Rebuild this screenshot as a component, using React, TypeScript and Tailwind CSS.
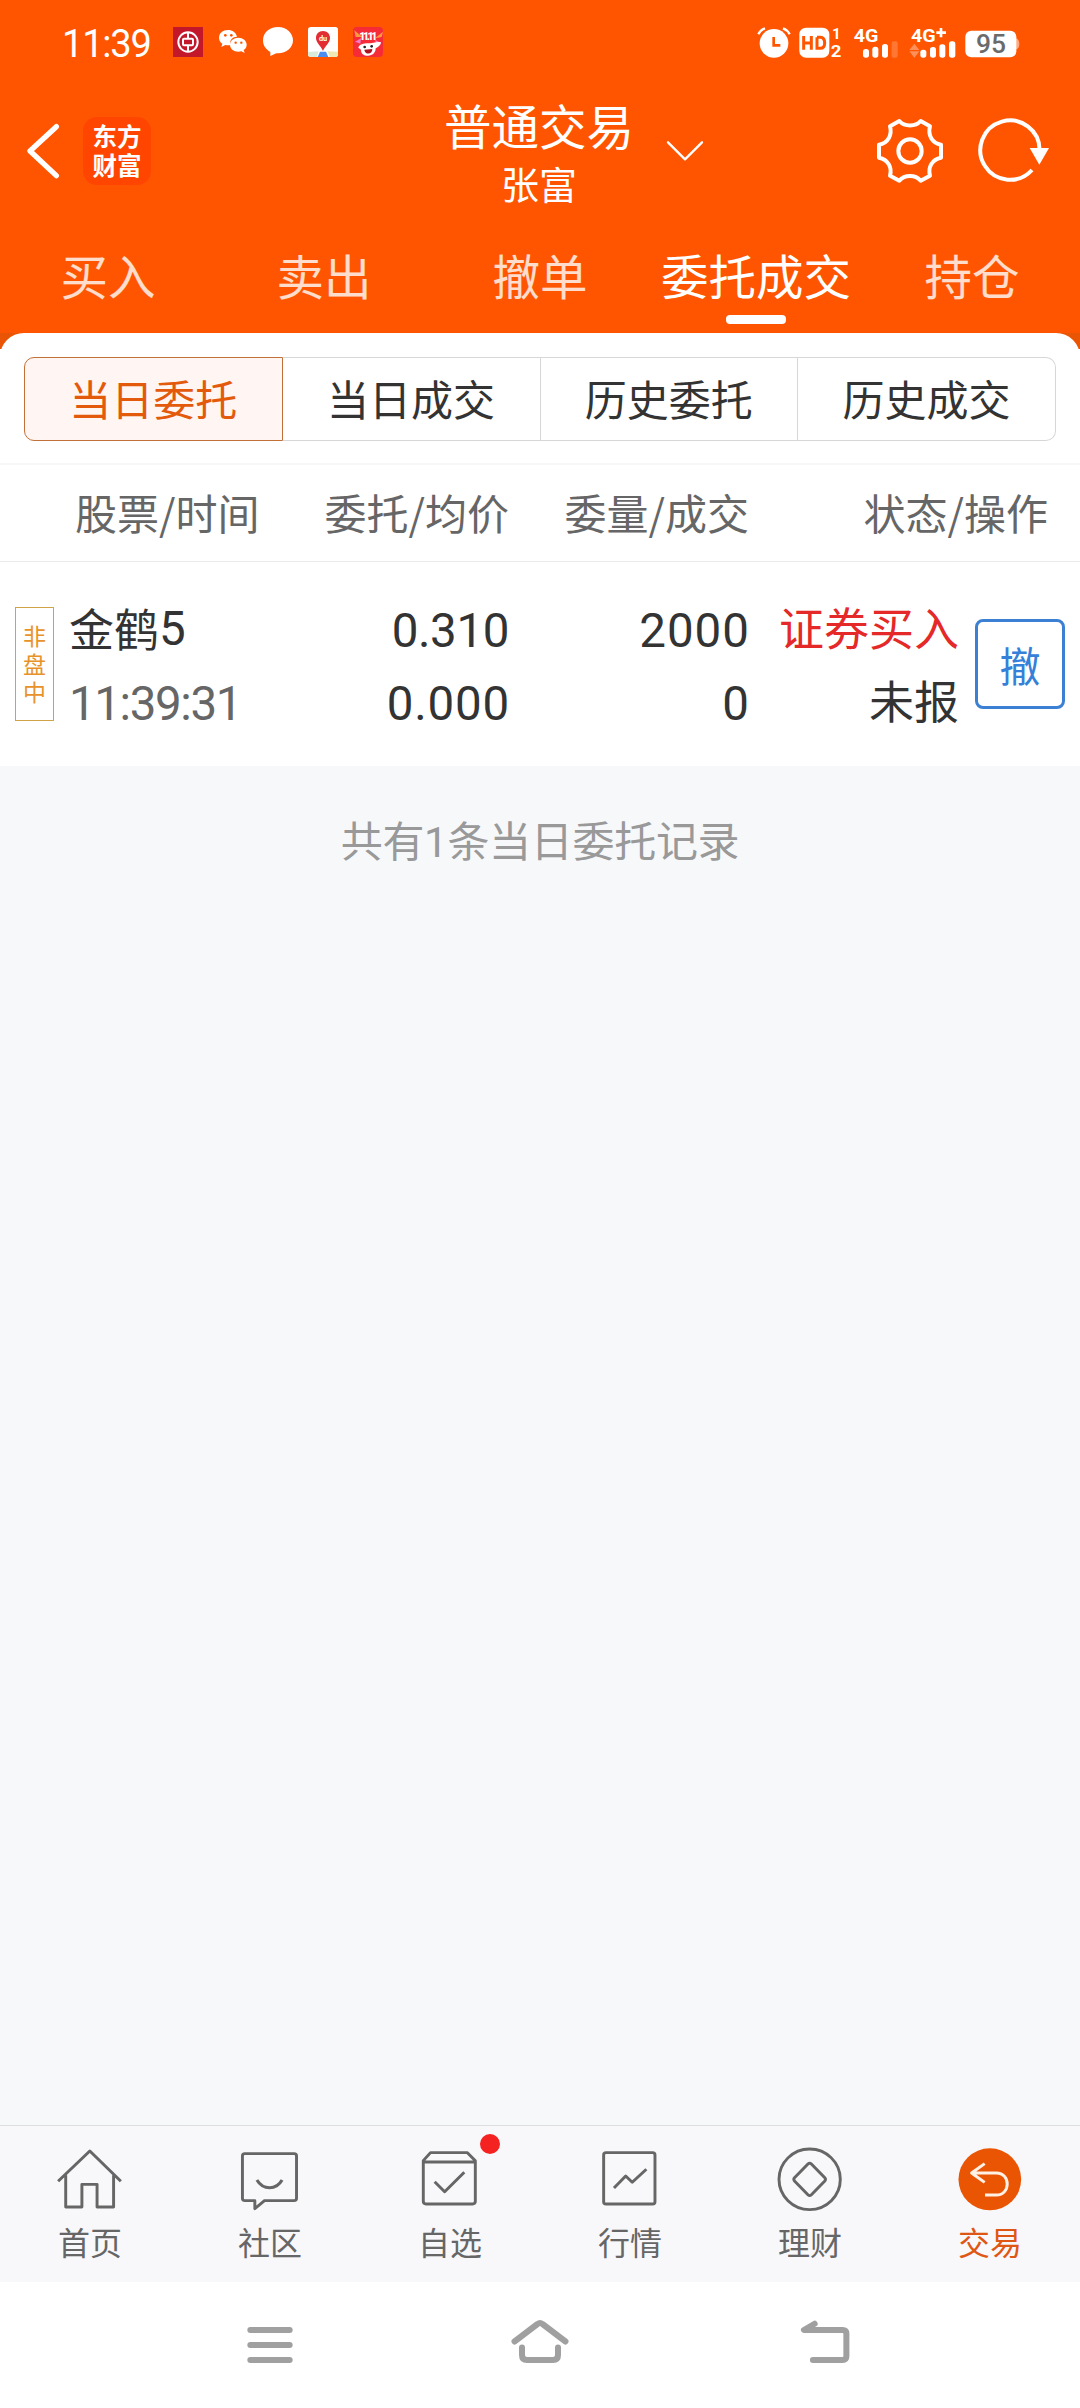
import React from "react";

const cjk = "font-['Noto_Sans_CJK_SC','Noto_Sans',sans-serif]";
const digits = "font-[Roboto,sans-serif]";

function StatusBar() {
  return (
    <div className="flex h-[84px] items-center justify-between pl-[62px] pr-[60px]">
      <div className="flex items-center">
        <span className={`${digits} w-[111px] text-[38px] leading-none tracking-[-1.2px] text-white pt-1`}>11:39</span>
        <div className="flex gap-[15px]">
          <svg className="size-[30px]" viewBox="0 0 90 90">
            <rect width="90" height="90" fill="#c2182a" />
            <circle cx="45" cy="45" r="29" fill="none" stroke="#fff" strokeWidth="6" />
            <rect x="30" y="35" width="30" height="20" rx="3" fill="none" stroke="#fff" strokeWidth="6" />
            <path d="M45 17V35M45 55V73" stroke="#fff" strokeWidth="6" />
          </svg>
          <svg className="size-[30px]" viewBox="0 0 90 90">
            <path d="M30 9C14 9 3 19 3 32c0 8 4 14 10 18l-3 10 12-6c3 1 7 1 10 1 2 0 4 0 5-1C34 38 44 29 57 29 54 16 43 9 30 9Z" fill="#fff" />
            <path d="M61 32c-14 0-25 9-25 21s11 21 25 21c3 0 6 0 9-1l10 5-3-9c6-4 9-10 9-16 0-12-11-21-25-21Z" fill="#fff" />
            <g fill="#ff5500"><circle cx="22" cy="25" r="4" /><circle cx="40" cy="25" r="4" /><circle cx="53" cy="47" r="3.5" /><circle cx="70" cy="47" r="3.5" /></g>
          </svg>
          <svg className="size-[30px]" viewBox="0 0 90 90">
            <path d="M45 0C19 0 0 17 0 40c0 16 9 28 22 35v12l18-8h5c26 0 45-17 45-39S71 0 45 0Z" fill="#fff" />
          </svg>
          <svg className="size-[30px]" viewBox="0 0 90 90">
            <rect width="90" height="90" rx="8" fill="#fff" />
            <path d="M0 75L32 73 26 90H8Q0 90 0 82Z" fill="#d9ead8" />
            <path d="M58 73L90 74V82Q90 90 82 90H66Z" fill="#f0e8b4" />
            <path d="M36 74H54L61 90H29Z" fill="#4a8ff0" />
            <path d="M45 12c-13 0-21 9-21 21 0 14 14 23 21 39 7-16 21-25 21-39 0-12-8-21-21-21Z" fill="#e22d32" />
            <text x="45" y="42" textAnchor="middle" fontFamily="Roboto" fontSize="22" fontWeight="700" fill="#fff">du</text>
          </svg>
          <svg className="size-[30px]" viewBox="0 0 90 90">
            <rect width="90" height="90" rx="12" fill="#f52c38" />
            <path d="M4 10L28 30 8 30ZM90 14L66 34 86 30Z" fill="#ff9a3c" />
            <path d="M6 44L24 34 22 50ZM84 48L66 38 70 54Z" fill="#f77ac4" />
            <text x="46" y="40" textAnchor="middle" fontFamily="Roboto" fontSize="31" fontWeight="900" fill="#fff" textLength="54">11.11</text>
            <path d="M16 62C18 52 32 49 45 49S74 42 84 46C84 54 76 60 68 64 68 78 58 86 45 86S24 80 24 68Z" fill="#fff" />
            <circle cx="35" cy="60" r="4" fill="#222" /><circle cx="56" cy="58" r="4" fill="#222" />
            <path d="M34 68L58 66C58 84 36 84 34 68Z" fill="#b01020" />
          </svg>
        </div>
      </div>
      <div className="flex items-center">
        <svg className="h-[33px] w-[34px]" viewBox="56 46 102 99">
          <circle cx="107" cy="98" r="43" fill="#fff" />
          <path d="M60 71Q66 58 80 53M154 71Q148 58 134 53" fill="none" stroke="#fff" strokeWidth="7" />
          <path d="M106 79V104H126" fill="none" stroke="#ff5500" strokeWidth="8" />
        </svg>
        <svg className="ml-[8px] h-[33px] w-[44px] overflow-visible" viewBox="182 46 132 99">
          <rect x="183" y="51" width="90" height="90" rx="20" fill="#fff" />
          <path d="M196 76V117M219 76V117M196 97H219M236 80V113H246Q259 113 259 97T246 80H236" fill="none" stroke="#ff5500" strokeWidth="9" />
          <text x="281" y="86" fontFamily="Roboto" fontSize="46" fontWeight="700" fill="#fff">1</text>
          <text x="277" y="138" fontFamily="Roboto" fontSize="50" fontWeight="700" fill="#fff" textLength="32" lengthAdjust="spacingAndGlyphs">2</text>
        </svg>
        <svg className="ml-[10px] h-[33px] w-[46px] overflow-visible" viewBox="342 46 138 99">
          <text x="344" y="93" fontFamily="Roboto" fontSize="56" fontWeight="700" fill="#fff" textLength="74" lengthAdjust="spacingAndGlyphs">4G</text>
          <g fill="#fff">
            <rect x="372" y="115" width="18" height="26" rx="8" /><rect x="400" y="108" width="18" height="33" rx="8" /><rect x="429" y="100" width="18" height="41" rx="8" />
            <rect x="458" y="92" width="18" height="49" rx="6" opacity=".2" />
          </g>
        </svg>
        <svg className="ml-[9px] h-[33px] w-[49px] overflow-visible" viewBox="506 46 147 99">
          <text x="515" y="93" fontFamily="Roboto" fontSize="56" fontWeight="700" fill="#fff" textLength="74" lengthAdjust="spacingAndGlyphs">4G</text>
          <path d="M591 66H620M605 52V80" stroke="#fff" strokeWidth="8" />
          <path d="M510 118L525 99 540 118ZM510 122L525 141 540 122Z" fill="#fff" opacity=".35" />
          <g fill="#fff">
            <rect x="543" y="117" width="18" height="24" rx="8" /><rect x="572" y="109" width="18" height="32" rx="8" /><rect x="600" y="101" width="18" height="40" rx="8" /><rect x="629" y="92" width="19" height="49" rx="8" />
          </g>
        </svg>
        <svg className="ml-[7px] h-[33px] w-[56px] overflow-visible" viewBox="674 46 168 99">
          <path d="M828 82Q840 84 840 100T828 116Z" fill="#fff" opacity=".5" />
          <rect x="678" y="60" width="153" height="80" rx="18" fill="#fff" />
          <text x="755" y="128" textAnchor="middle" fontFamily="Roboto" fontSize="76" fontWeight="500" fill="#6b6b6b" textLength="90" lengthAdjust="spacingAndGlyphs">95</text>
        </svg>
      </div>
    </div>
  );
}

function TitleBar() {
  return (
    <div className="grid h-[134px] grid-cols-[1fr_auto_1fr] items-center">
      <div className="flex items-center">
        <svg className="ml-[24px] h-[60px] w-[38px]" viewBox="72 94 114 180" fill="none" stroke="#fff" strokeWidth="16" strokeLinecap="round" strokeLinejoin="round">
          <path d="M169 111L90 184 169 258" />
        </svg>
        <div className="ml-[21px] flex size-[68px] flex-col items-center justify-center rounded-[14px] bg-[#ff4500] pb-[2px] text-[24.5px] font-bold leading-[29px] text-white">
          <span>东方</span>
          <span>财富</span>
        </div>
      </div>
      <div className="flex flex-col items-center pr-[2px] pt-[6px] text-white">
        <h1 className="text-[47.5px] leading-[58px]">普通交易</h1>
        <p className="text-[38px] leading-[58px]">张富</p>
      </div>
      <div className="flex items-center">
        <svg className="ml-[28px] h-[24px] w-[42px]" viewBox="909 147 126 72" fill="none" stroke="#fff" strokeWidth="7" strokeLinecap="round" strokeLinejoin="round">
          <path d="M921 157L972 208 1023 157" />
        </svg>
        <svg className="ml-auto h-[72px] w-[72px]" viewBox="464 75 216 216" fill="none" stroke="#fff" strokeWidth="12" strokeLinejoin="round">
          <path d="M540 93C556 111 588 111 604 93L632 109C625 135 638 160 665 164V203C638 208 625 232 632 257L604 272C588 253 556 253 540 272L512 257C519 232 506 208 479 203V164C506 160 519 135 512 109Z" />
          <circle cx="572" cy="183" r="35" />
        </svg>
        <svg className="ml-[28px] mr-[28px] h-[72px] w-[78px]" viewBox="765 75 234 216" fill="none" stroke="#fff" strokeWidth="12">
          <path d="M962 180A89 89 0 1 0 939 240" />
          <path d="M932 174H990L961 224Z" fill="#fff" stroke="none" />
        </svg>
      </div>
    </div>
  );
}

const mainTabs = ["买入", "卖出", "撤单", "委托成交", "持仓"];
const segments = ["当日委托", "当日成交", "历史委托", "历史成交"];

function MainTabs() {
  return (
    <nav className="grid h-[115px] grid-cols-5 pt-[29px]">
      {mainTabs.map((t) => (
        <div key={t} className="flex flex-col items-center">
          <span className={t === "委托成交" ? "whitespace-nowrap text-[47.5px] leading-[56px] text-white" : "text-[47.5px] leading-[56px] text-white/80"}>{t}</span>
          {t === "委托成交" && <span className="mt-[12px] h-[9px] w-[60px] rounded-[4px] bg-white" />}
        </div>
      ))}
    </nav>
  );
}

function Segments() {
  return (
    <div className="flex h-[132px] border-b-2 border-[#f7f7f7] px-[24px] pt-[24px]">
      {segments.map((s, i) => (
        <button
          key={s}
          className={
            i === 0
              ? "h-[84px] flex-1 rounded-l-[10px] border border-[#c07038] bg-[#fff5f2] pb-[2px] text-[42px] leading-[60px] text-[#e35a0c]"
              : i === 3
                ? "h-[84px] flex-1 rounded-r-[10px] border border-l-0 border-[#d6d8d8] pb-[2px] text-[42px] leading-[60px] text-[#333]"
                : "h-[84px] flex-1 border-y border-r border-[#d6d8d8] pb-[2px] text-[42px] leading-[60px] text-[#333]"
          }
        >
          {s}
        </button>
      ))}
    </div>
  );
}

function Orders() {
  return (
    <>
      <div className="flex h-[97px] items-center border-b border-[#ebebeb] pb-[4px] pl-[75px] text-[42px] text-[#666]">
        <span className="w-[200px]">股票/时间</span>
        <span className="w-[234px] text-right">委托/均价</span>
        <span className="w-[240px] text-right">委量/成交</span>
        <span className="w-[299px] text-right">状态/操作</span>
      </div>
      <div className="flex h-[204px] items-center px-[15px] text-[#333]">
        <div className="flex h-[114px] w-[39px] flex-col items-center justify-center border border-[#d0a347] pb-[2px] text-[23px] leading-[28px] text-[#e8932a]">
          <span>非</span>
          <span>盘</span>
          <span>中</span>
        </div>
        <div className="ml-[15px] w-[190px] pb-[1px] text-[45px] leading-[73px]">
          <div className="flex h-[73px] items-center">
            金鹤<span className={`${digits} pt-[5px] text-[47.5px]`}>5</span>
          </div>
          <div className={`${digits} flex h-[73px] items-center whitespace-nowrap pt-[8px] text-[47.5px] tracking-[-1.4px] text-[#666]`}>11:39:31</div>
        </div>
        <div className={`${digits} w-[250px] pt-[8px] text-right text-[47.5px] leading-[73px]`}>
          <div className="tracking-[-0.4px]">0.310</div>
          <div className="-mr-[1px] tracking-[0.8px]">0.000</div>
        </div>
        <div className={`${digits} w-[240px] pt-[8px] text-right text-[47.5px] leading-[73px]`}>
          <div className="-mr-[1px] tracking-[1px]">2000</div>
          <div>0</div>
        </div>
        <div className="w-[210px] pb-[2px] text-right text-[45px] leading-[73px]">
          <div className="text-[#e52828]">证券买入</div>
          <div>未报</div>
        </div>
        <button className="ml-auto h-[90px] w-[90px] rounded-[8px] border-[3px] border-[#3c80d4] text-[41px] leading-none text-[#3580d8]">撤</button>
      </div>
    </>
  );
}

const bottomTabs: { label: string; box: string; art: React.ReactNode; dot?: boolean; active?: boolean }[] = [
  { label: "首页", box: "157 102 209 216", art: <path d="M169 214L261 123 351 214M191 196V291H238V223H282V291H330V196" /> },
  { label: "社区", box: "679.5 102 209 216", art: <><path d="M711 131H854Q861 131 861 138V265Q861 272 854 272H768L740 296V272H711Q704 272 704 265V138Q704 131 711 131Z" /><path d="M746 210C764 241 802 241 819 210" strokeWidth="9" /></> },
  { label: "自选", box: "1202 102 209 216", dot: true, art: <><path d="M1229 152L1250 128H1357L1380 152V274Q1380 282 1372 282H1237Q1229 282 1229 274ZM1229 156H1380" /><path d="M1262 215L1291 245 1348 187" /></> },
  { label: "行情", box: "157 102 209 216", art: <><rect x="185" y="128" width="149" height="154" rx="7" /><path d="M215 234L249 198 268 217 309 178" /></> },
  { label: "理财", box: "679.5 102 209 216", art: <><ellipse cx="783" cy="208" rx="89" ry="91" /><path d="M778 162Q783 157 788 162L827 203Q831 208 827 213L788 254Q783 259 778 254L739 213Q735 208 739 203Z" /></> },
  { label: "交易", box: "1202 102 209 216", active: true, art: <><ellipse cx="1306" cy="208" rx="91" ry="93" fill="#ea5504" stroke="none" /><path d="M1291 161L1253 189 1291 217M1255 189H1325C1367 189 1367 255 1325 255H1292" stroke="#fff1e6" /></> },
];

function BottomTabs() {
  return (
    <nav className="grid h-[157px] grid-cols-6 border-t border-[#dcdfe2] bg-[#f8f8fa]">
      {bottomTabs.map((t) => (
        <div key={t.label} className="relative flex flex-col items-center pt-[18px]">
          <svg className="size-[72px]" viewBox={t.box} preserveAspectRatio="none" fill="none" stroke="#666" strokeWidth="8.5" strokeLinejoin="round">{t.art}</svg>
          <span className={t.active ? "mt-[3px] text-[32px] leading-[44px] text-[#de5714]" : "mt-[3px] text-[32px] leading-[44px] text-[#666]"}>{t.label}</span>
          {t.dot && <span className="absolute left-[120px] top-[8px] size-[20px] rounded-full bg-[#f52222]" />}
        </div>
      ))}
    </nav>
  );
}

function SystemNav() {
  return (
    <div className="flex h-[126px] items-center bg-white pl-[240px]">
      <svg className="h-[56px] w-[60px]" viewBox="697 621 174 168" preserveAspectRatio="none" stroke="#a0a0a0" strokeWidth="17.500" strokeLinecap="round">
        <path d="M727 660H841M727 705H841M727 750H841" />
      </svg>
      <svg className="ml-[210px] h-[56px] w-[60px]" viewBox="0 0 60 56" fill="none" stroke="#a0a0a0" strokeWidth="6" strokeLinecap="round" strokeLinejoin="round">
        <path d="M4.500 24.500L27.500 7Q30 5 32.500 7L55.500 24.500M12 30.500V38Q12 43 17 43H43Q48 43 48 38V30.500" />
      </svg>
      <svg className="ml-[225px] h-[56px] w-[60px]" viewBox="740 621 174 168" preserveAspectRatio="none" fill="none" stroke="#a0a0a0" strokeWidth="17.500" strokeLinecap="round" strokeLinejoin="round">
        <path d="M797 641L766 660H878Q889 660 889 671V739Q889 750 878 750H792" />
      </svg>
    </div>
  );
}

export default function App() {
  return (
    <div className={`${cjk} flex h-[2408px] w-[1080px] flex-col bg-[#f7f8fa]`}>
      <header className="bg-[#ff5500]">
        <StatusBar />
        <TitleBar />
        <MainTabs />
      </header>
      <div className="bg-linear-to-b from-[#e95504] from-[16px] to-white to-[16px]">
        <main className="rounded-t-[24px] bg-white">
          <Segments />
          <Orders />
        </main>
      </div>
      <p className="mt-[47px] text-center font-[Roboto,'Noto_Sans_CJK_SC',sans-serif] text-[42px] leading-[60px] tracking-[-0.3px] text-[#999]">共有1条当日委托记录</p>
      <div className="mt-auto">
        <BottomTabs />
        <SystemNav />
      </div>
    </div>
  );
}
